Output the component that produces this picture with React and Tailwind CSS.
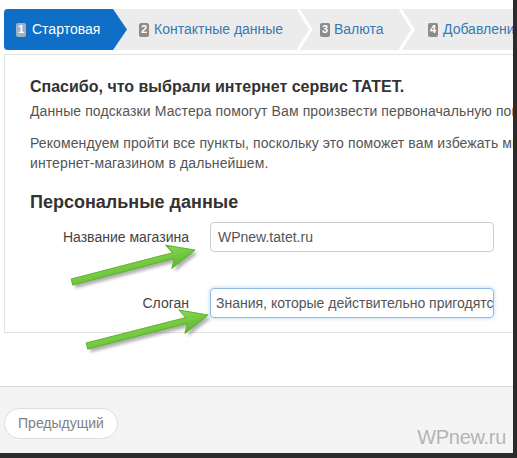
import React from 'react'

// green pointer arrows drawn on top of the form
function Arrow({ x, y, length, angle }) {
  const L = length
  const pts = `0,-3 ${L - 22},-3 ${L - 27},-12 ${L},0 ${L - 27},12 ${L - 22},3 0,3`
  return (
    <g transform={`translate(${x} ${y}) rotate(${angle})`}>
      <polygon points={pts} transform="translate(2 4)" fill="#555" opacity="0.45" filter="url(#blur)" />
      <polygon points={pts} fill="url(#green)" stroke="#5cb52c" strokeWidth="1" strokeLinejoin="round" />
    </g>
  )
}

function Badge({ n, active }) {
  return (
    <span
      className={
        'inline-flex items-center justify-center w-[10px] h-[14px] rounded-[2px] text-[11px] font-bold text-white leading-none ' +
        (active ? 'bg-[#9fb0c2]' : 'bg-[#8c8c8c]')
      }
    >
      {n}
    </span>
  )
}

function Chevron() {
  return (
    <svg width="16" height="41" viewBox="0 0 16 41" className="shrink-0">
      <polyline points="1,0 14,20.5 1,41" fill="none" stroke="#ffffff" strokeWidth="3" />
    </svg>
  )
}

export default function App() {
  return (
    <div className="w-[517px] h-[458px] bg-[#2b2b2b] font-['Liberation_Sans',Arial,sans-serif]">
      <div className="relative w-[513px] h-[453px] bg-white overflow-hidden flex flex-col">
        {/* step tabs */}
        <div className="mt-[9px] ml-[4px] h-[41px] bg-[#ececec] flex items-center whitespace-nowrap overflow-hidden text-[14px]">
          <div className="h-full w-[123px] shrink-0 bg-[#0f6fc6] rounded-l-[4px] flex items-center gap-[6px] pl-[12px] text-white [clip-path:polygon(0_0,calc(100%-14px)_0,100%_50%,calc(100%-14px)_100%,0_100%)]">
            <Badge n="1" active />
            <span>Стартовая</span>
          </div>
          <div className="h-full w-[186px] shrink-0 flex items-center pl-[12px] text-[#3679b5]">
            <Badge n="2" />
            <span className="ml-[5px]">Контактные данные</span>
            <div className="ml-auto">
              <Chevron />
            </div>
          </div>
          <div className="h-full w-[102px] shrink-0 flex items-center pl-[7px] text-[#3679b5]">
            <Badge n="3" />
            <span className="ml-[4px]">Валюта</span>
            <div className="ml-auto">
              <Chevron />
            </div>
          </div>
          <div className="h-full shrink-0 flex items-center pl-[13px] text-[#3679b5]">
            <Badge n="4" />
            <span className="ml-[5px]">Добавление товаров</span>
          </div>
        </div>

        {/* wizard panel */}
        <div className="mt-[4px] ml-[4px] w-[560px] border-l border-t border-b border-[#e2e2e2] pt-[22px] pb-[14px]">
          <div className="pl-[25px] whitespace-nowrap">
            <h1 className="text-[16px] leading-[20px] font-bold text-[#333]">Спасибо, что выбрали интернет сервис TATET.</h1>
            <p className="mt-[4px] text-[14px] leading-[20px] tracking-[0.1px] text-[#555]">
              Данные подсказки Мастера помогут Вам произвести первоначальную пошаговую настройку.
            </p>
            <p className="mt-[12px] text-[14px] leading-[20px] tracking-[0.1px] text-[#555]">
              Рекомендуем пройти все пункты, поскольку это поможет вам избежать многих вопросов
              <br />
              интернет-магазином в дальнейшем.
            </p>
            <h2 className="mt-[17px] text-[18px] leading-[24px] font-bold text-[#333]">Персональные данные</h2>
          </div>

          <div className="mt-[8px] flex items-center">
            <label className="w-[184px] text-right text-[14px] text-[#444]">Название магазина</label>
            <div className="ml-[21px] w-[284px] h-[30px] border border-[#cccccc] rounded-[4px] flex items-center pl-[7px] text-[14px] text-[#555] whitespace-nowrap overflow-hidden">
              WPnew.tatet.ru
            </div>
          </div>

          <div className="mt-[36px] flex items-center">
            <label className="w-[184px] text-right text-[14px] text-[#444]">Слоган</label>
            <div className="ml-[21px] w-[284px] h-[30px] border border-[#8dbbe4] rounded-[4px] shadow-[0_0_4px_rgba(102,175,233,0.55)] flex items-center pl-[6px] pr-[4px] text-[14px] text-[#555] whitespace-nowrap overflow-hidden">
              <span className="inline-block w-[1px] h-[16px] bg-[#333] mr-[-1px]" />
              Знания, которые действительно пригодятся
            </div>
          </div>
        </div>

        {/* footer */}
        <div className="mt-[53px] flex-1 border-t border-[#dcdcdc] bg-[#f4f4f4] pt-[21px]">
          <button className="ml-[4px] w-[114px] h-[31px] rounded-full border border-[#dddddd] bg-white text-[14px] text-[#808080]">
            Предыдущий
          </button>
        </div>

        {/* watermark */}
        <div className="absolute right-[7px] bottom-[1px] text-[20px] text-[#b4b4b4] tracking-[-0.3px]">WPnew.ru</div>

        <svg className="absolute inset-0 pointer-events-none" width="513" height="453">
          <defs>
            <linearGradient id="green" x1="0" y1="0" x2="0" y2="1">
              <stop offset="0" stopColor="#8fd85a" />
              <stop offset="1" stopColor="#5cba2a" />
            </linearGradient>
            <filter id="blur" x="-20%" y="-50%" width="140%" height="200%">
              <feGaussianBlur stdDeviation="1.5" />
            </filter>
          </defs>
          <Arrow x={72} y={282} length={127} angle={-14.6} />
          <Arrow x={87} y={346} length={125} angle={-14.4} />
        </svg>
      </div>
    </div>
  )
}
